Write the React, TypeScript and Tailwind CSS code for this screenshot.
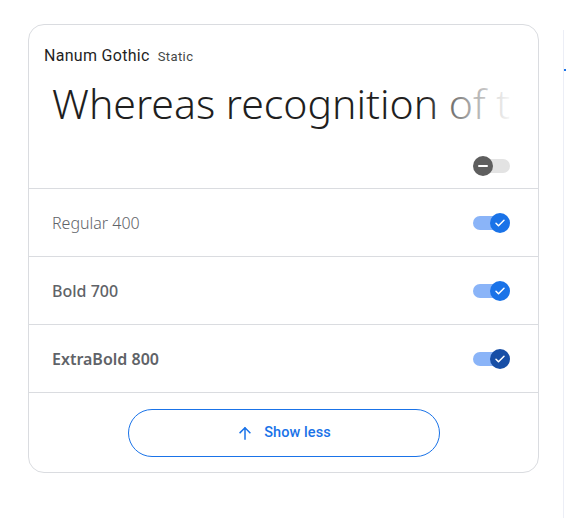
import React from "react";

function Toggle({ state }: { state: "off" | "on" | "onDark" }) {
  if (state === "off") {
    return (
      <div className="relative w-[37px] h-[20px] flex items-center">
        <div className="absolute left-[1px] right-0 h-[14px] rounded-full bg-[#e3e3e3]" />
        <div className="absolute left-0 w-[20px] h-[20px] rounded-full bg-[#5e5e5e] flex items-center justify-center">
          <div className="w-[10px] h-[2px] bg-white rounded" />
        </div>
      </div>
    );
  }
  const thumb = state === "on" ? "bg-[#1a73e8]" : "bg-[#174ea6]";
  return (
    <div className="relative w-[37px] h-[20px] flex items-center">
      <div className="absolute left-0 right-[4px] h-[14px] rounded-full bg-[#8ab4f8]" />
      <div className={`absolute right-0 w-[20px] h-[20px] rounded-full ${thumb} flex items-center justify-center`}>
        <svg width="12" height="12" viewBox="0 0 24 24" fill="none">
          <path d="M4 12.5l5 5L20 6.5" stroke="white" strokeWidth="3" strokeLinecap="round" strokeLinejoin="round" />
        </svg>
      </div>
    </div>
  );
}

function Row({ label, weight, toggle }: { label: string; weight: string; toggle: "on" | "onDark" }) {
  return (
    <div className="h-[68px] border-t border-[#dadce0] flex items-center justify-between pl-[23px] pr-[28px]">
      <span className={`text-[16px] text-[#5f6368] ${weight}`} style={{ fontFamily: '"Noto Sans", sans-serif' }}>
        {label}
      </span>
      <Toggle state={toggle} />
    </div>
  );
}

export default function App() {
  return (
    <div className="w-[566px] h-[518px] bg-white flex overflow-hidden" style={{ fontFamily: 'Roboto, "Noto Sans", sans-serif' }}>
      <div className="pl-[28px] pt-[24px] shrink-0">
        <div className="w-[511px] h-[449px] border border-[#dadce0] rounded-[16px] flex flex-col overflow-hidden">
          <div className="pt-[20px] pl-[15px] flex items-baseline gap-[8px]">
            <span className="text-[16px] text-[#1f1f1f] leading-[22px] tracking-[0.3px]">Nanum Gothic</span>
            <span className="text-[13px] text-[#444746] tracking-[0.4px]">Static</span>
          </div>
          <div className="relative pl-[23px] pr-[24px] mt-[8px] h-[56px] overflow-hidden">
            <div
              className="whitespace-nowrap text-[41px] leading-[56px] text-[#1f1f1f] font-light"
              style={{ fontFamily: '"Noto Sans", sans-serif' }}
            >
              Whereas recognition of the inherent dignity
            </div>
            <div className="absolute top-0 bottom-0 right-0 w-[24px] bg-white" />
            <div className="absolute top-0 bottom-0 right-[24px] w-[90px] bg-gradient-to-r from-white/0 via-white/60 to-white" />
          </div>
          <div className="h-[57px] flex items-center justify-end pr-[28px] pt-[13px]">
            <Toggle state="off" />
          </div>
          <Row label="Regular 400" weight="font-light" toggle="on" />
          <Row label="Bold 700" weight="font-medium" toggle="on" />
          <Row label="ExtraBold 800" weight="font-semibold" toggle="onDark" />
          <div className="border-t border-[#dadce0] flex-1 flex items-start justify-center pt-[16px]">
            <button className="w-[312px] h-[48px] rounded-full border border-[#1a73e8] flex items-center justify-center gap-[10px] text-[#1a73e8] text-[14.5px] font-medium tracking-[0.1px]">
              <svg width="18" height="18" viewBox="0 0 24 24" fill="none">
                <path d="M12 20V5M5.5 11.5L12 5l6.5 6.5" stroke="#1a73e8" strokeWidth="2" strokeLinecap="square" />
              </svg>
              Show less
            </button>
          </div>
        </div>
      </div>
      <div className="ml-[24px] mt-[30px] flex-1 border-l border-[#eceef6] relative">
        <div className="absolute top-[39px] left-0 w-[3px] h-[2px] bg-[#1a73e8]" />
      </div>
    </div>
  );
}
